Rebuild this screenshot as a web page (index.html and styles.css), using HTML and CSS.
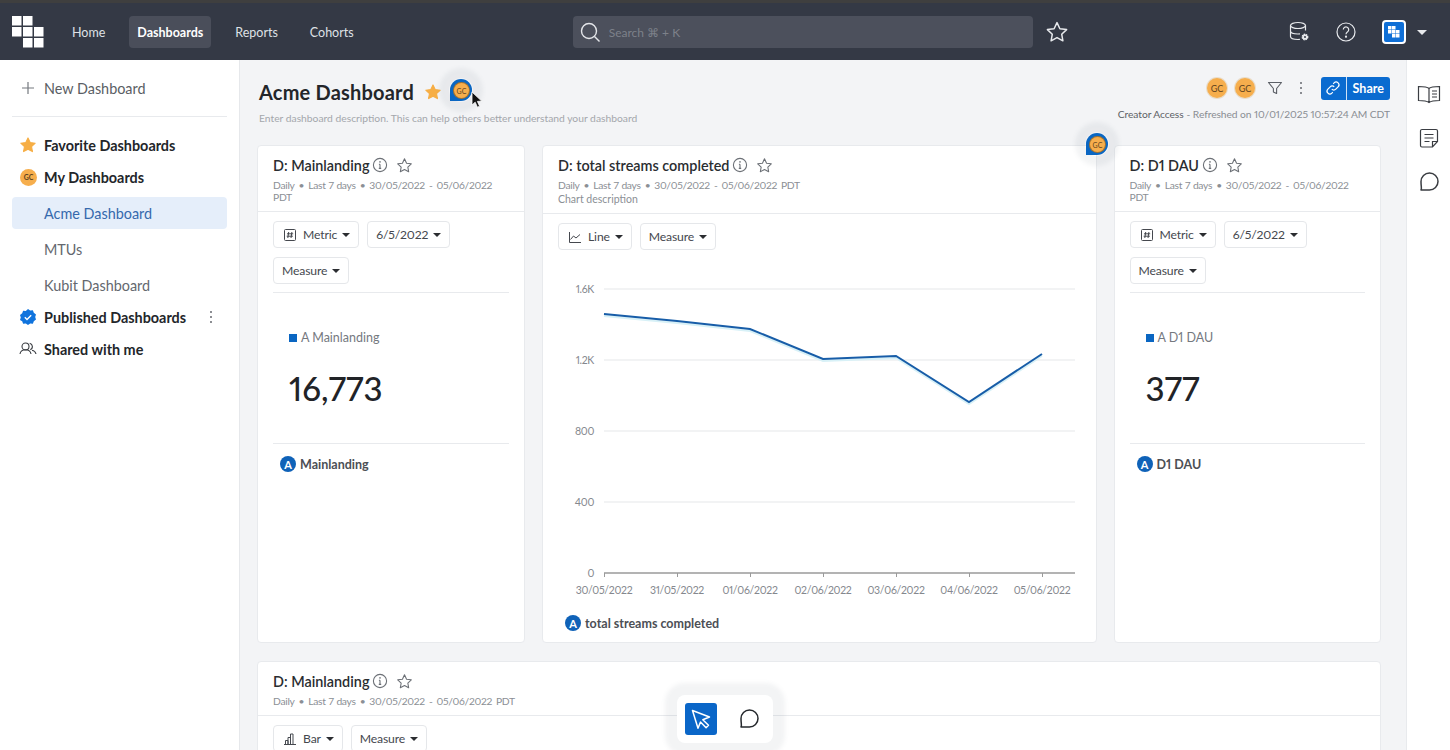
FILE: index.html
```html
<!DOCTYPE html>
<html lang="en">
<head>
<meta charset="utf-8">
<title>Acme Dashboard</title>
<link rel="stylesheet" href="styles.css">
</head>
<body>
<svg class="defs" width="0" height="0" aria-hidden="true">
  <symbol id="star" viewBox="0 0 24 24"><path d="M12 2.6l2.9 6.1 6.7.9-4.9 4.6 1.2 6.6-5.9-3.2-5.9 3.2 1.2-6.6-4.9-4.6 6.7-.9z" fill="none" stroke="currentColor" stroke-width="1.5" stroke-linejoin="round"/></symbol>
  <symbol id="starfill" viewBox="0 0 24 24"><path d="M12 2.6l2.9 6.1 6.7.9-4.9 4.6 1.2 6.6-5.9-3.2-5.9 3.2 1.2-6.6-4.9-4.6 6.7-.9z" fill="#f6ae45" stroke="#f6ae45" stroke-width="1.5" stroke-linejoin="round"/></symbol>
  <symbol id="info" viewBox="0 0 16 16"><circle cx="8" cy="8" r="6.6" fill="none" stroke="currentColor" stroke-width="1.1"/><path d="M8 7.2v4.2M6.8 11.4h2.4M6.9 7.2H8" fill="none" stroke="currentColor" stroke-width="1.1"/><circle cx="8" cy="4.9" r=".8" fill="currentColor"/></symbol>
  <symbol id="bubble" viewBox="0 0 24 24"><path d="M12 1a11 11 0 0 1 0 22H1V12A11 11 0 0 1 12 1z" fill="#0a66c2"/></symbol>
  <symbol id="comment" viewBox="0 0 24 24"><path d="M12.5 3a8.5 8.5 0 0 1 0 17H4c1-1.5 0-3 0-8.500A8.500 8.500 0 0 1 12.500 3z" fill="none" stroke="currentColor" stroke-width="1.5" stroke-linejoin="round"/></symbol>
</svg>

<header class="topbar">
  <svg class="logo" width="32" height="32" viewBox="0 0 32 32" aria-hidden="true">
    <g fill="#fff"><rect x="0" y="0" width="9.500" height="9.500"/><rect x="11" y="0" width="9.500" height="9.500"/><rect x="0" y="11" width="9.500" height="9.500"/><rect x="11" y="11" width="9.500" height="9.500"/><rect x="22" y="11" width="9.500" height="9.500"/><rect x="11" y="22" width="9.500" height="9.500"/><rect x="22" y="22" width="9.500" height="9.500"/></g>
  </svg>
  <nav class="nav">
    <a class="nav-item">Home</a>
    <a class="nav-item is-active">Dashboards</a>
    <a class="nav-item">Reports</a>
    <a class="nav-item">Cohorts</a>
  </nav>
  <div class="search">
    <svg width="22" height="22" viewBox="0 0 22 22" aria-hidden="true"><circle cx="10" cy="10" r="7.500" fill="none" stroke="#e4e6ea" stroke-width="1.400"/><path d="M15.500 15.500l5 5" stroke="#e4e6ea" stroke-width="1.400"/></svg>
    <span>Search ⌘ + K</span>
  </div>
  <svg class="top-star" width="24" height="24" aria-hidden="true"><use href="#star"/></svg>
  <div class="top-right">
    <svg width="22" height="22" viewBox="0 0 22 22" aria-hidden="true" fill="none" stroke="#e8eaed" stroke-width="1.200"><ellipse cx="10" cy="4.500" rx="7.500" ry="3"/><path d="M2.500 4.500v11c0 1.700 3.300 3 7.500 3 .7 0 1.300 0 1.900-.1M17.500 4.500v5M2.500 10c0 1.700 3.300 3 7.500 3 .7 0 1.400 0 2-.1"/><circle cx="17" cy="16" r="2.600" fill="#e8eaed" stroke-dasharray="1.500 .6" stroke-width="1.600"/><circle cx="17" cy="16" r="1" fill="#343945" stroke="none"/></svg>
    <svg width="20" height="20" viewBox="0 0 20 20" aria-hidden="true" fill="none" stroke="#e8eaed" stroke-width="1.200"><circle cx="10" cy="10" r="9"/><path d="M7.300 7.600a2.700 2.700 0 1 1 4.300 2.200c-1 .7-1.600 1.200-1.600 2.500"/><circle cx="10" cy="14.700" r=".5" fill="#e8eaed"/></svg>
    <div class="workspace">
      <svg width="14" height="14" viewBox="0 0 14 14" aria-hidden="true"><g fill="#fff"><rect x="1" y="1" width="3.500" height="3.500"/><rect x="5" y="1" width="3.500" height="3.500"/><rect x="1" y="5" width="3.500" height="3.500"/><rect x="5" y="5" width="3.500" height="3.500"/><rect x="9" y="5" width="3.500" height="3.500"/><rect x="5" y="9" width="3.500" height="3.500"/><rect x="9" y="9" width="3.500" height="3.500"/></g></svg>
    </div>
    <span class="caret caret-light"></span>
  </div>
</header>

<div class="shell">
  <aside class="sidebar">
    <div class="new-row">
      <svg width="14" height="14" viewBox="0 0 14 14" aria-hidden="true"><path d="M7 1v12M1 7h12" stroke="#75797f" stroke-width="1.200"/></svg>
      <span>New Dashboard</span>
    </div>
    <ul class="tree">
      <li class="tree-head"><svg class="tree-icon" width="18" height="18" aria-hidden="true"><use href="#starfill"/></svg>Favorite Dashboards</li>
      <li class="tree-head"><span class="avatar avatar-side">GC</span>My Dashboards</li>
      <li class="tree-sub is-current">Acme Dashboard</li>
      <li class="tree-sub">MTUs</li>
      <li class="tree-sub">Kubit Dashboard</li>
      <li class="tree-head">
        <svg class="tree-icon" width="18" height="18" viewBox="0 0 18 18" aria-hidden="true"><path d="M9 1l2.200 1.500 2.700-.2.900 2.500 2.200 1.600-.8 2.600.8 2.600-2.200 1.600-.9 2.500-2.700-.2L9 17l-2.200-1.500-2.700.2-.9-2.500L1 12.100 1.800 9.500 1 6.900l2.200-1.600.9-2.500 2.700.2z" fill="#0f73dd"/><path d="M5.800 9.300l2.200 2.200 4.200-4.300" fill="none" stroke="#fff" stroke-width="1.400"/></svg>
        Published Dashboards
        <span class="kebab kebab-side"><i></i><i></i><i></i></span>
      </li>
      <li class="tree-head">
        <svg class="tree-icon" width="18" height="18" viewBox="0 0 18 18" aria-hidden="true" fill="none" stroke="#3a3d42" stroke-width="1.100"><circle cx="6.500" cy="6.500" r="3.500"/><path d="M1 14c.4-2.700 2.400-4.200 5.500-4.200S11.600 11.300 12 14M10.700 3.200a3.500 3.500 0 0 1 .6 6.600M13 10.200c2.300.4 3.600 1.800 4 3.800"/></svg>
        Shared with me
      </li>
    </ul>
  </aside>

  <main class="main">
    <section class="page-head">
      <div class="head-left">
        <div class="title-row">
          <h1>Acme Dashboard</h1>
          <svg width="18" height="18" aria-hidden="true"><use href="#starfill"/></svg>
        </div>
        <p class="desc">Enter dashboard description. This can help others better understand your dashboard</p>
      </div>
      <div class="head-right">
        <div class="actions">
          <span class="avatar">GC</span>
          <span class="avatar">GC</span>
          <svg class="filter" width="16" height="16" viewBox="0 0 16 16" aria-hidden="true"><path d="M1.500 2.500h13L9.600 8.500v5l-3.200-1.600V8.500z" fill="none" stroke="#5b5f66" stroke-width="1.100" stroke-linejoin="round"/></svg>
          <span class="kebab"><i></i><i></i><i></i></span>
          <div class="share">
            <span class="share-link"><svg width="16" height="16" viewBox="0 0 16 16" aria-hidden="true" fill="none" stroke="#fff" stroke-width="1.200"><path d="M6.800 9.200a2.800 2.800 0 0 0 4 0l2.300-2.300a2.800 2.800 0 0 0-4-4l-.9.900"/><path d="M9.200 6.800a2.800 2.800 0 0 0-4 0L2.900 9.100a2.800 2.800 0 0 0 4 4l.9-.9"/></svg></span>
            <span class="share-text">Share</span>
          </div>
        </div>
        <p class="access"><span class="access-role">Creator Access</span><span>- Refreshed on 10/01/2025 10:57:24 AM CDT</span></p>
      </div>
    </section>

    <section class="board">
      <article class="card">
        <div class="card-head">
          <div class="card-title"><h2>D: Mainlanding</h2><svg class="i-info" width="16" height="16" aria-hidden="true"><use href="#info"/></svg><svg class="i-star" width="17" height="17" aria-hidden="true"><use href="#star"/></svg></div>
          <p class="meta meta-date"><span>Daily</span><span>•</span><span>Last 7 days</span><span>•</span><span>30/05/2022</span><span>-</span><span>05/06/2022</span><span>PDT</span></p>
        </div>
        <div class="card-body">
          <div class="tools tools-rule">
            <button class="tool"><svg width="14" height="14" viewBox="0 0 14 14" aria-hidden="true" fill="none" stroke="#45484e" stroke-width="1"><rect x="1.500" y="1.500" width="11" height="11" rx="1"/><path d="M5.700 4l-.9 6M8.900 4L8 10M4 5.800h6.200M3.700 8.200h6.200"/></svg>Metric<span class="caret"></span></button>
            <button class="tool">6/5/2022<span class="caret"></span></button>
            <button class="tool">Measure<span class="caret"></span></button>
          </div>
          <div class="metric">
            <div class="metric-label"><span class="swatch"></span>A Mainlanding</div>
            <div class="metric-value">16,773</div>
          </div>
          <div class="legend legend-rule"><span class="badge">A</span>Mainlanding</div>
        </div>
      </article>

      <article class="card">
        <div class="card-head">
          <div class="card-title"><h2>D: total streams completed</h2><svg class="i-info" width="16" height="16" aria-hidden="true"><use href="#info"/></svg><svg class="i-star" width="17" height="17" aria-hidden="true"><use href="#star"/></svg></div>
          <p class="meta meta-date"><span>Daily</span><span>•</span><span>Last 7 days</span><span>•</span><span>30/05/2022</span><span>-</span><span>05/06/2022</span><span>PDT</span></p>
          <p class="meta">Chart description</p>
        </div>
        <div class="card-body">
          <div class="tools">
            <button class="tool"><svg width="14" height="14" viewBox="0 0 14 14" aria-hidden="true" fill="none" stroke="#45484e" stroke-width="1"><path d="M1.500 2v10.500H13M2.500 9.500l3-3.500 2.500 2 4-3.500"/></svg>Line<span class="caret"></span></button>
            <button class="tool">Measure<span class="caret"></span></button>
          </div>
          <svg class="chart" width="522" height="350" viewBox="558 263 522 350" aria-label="Line chart of total streams completed">
            <g stroke="#eeeff1" stroke-width="1.500"><path d="M604 289H1075M604 360H1075M604 431H1075M604 502H1075"/></g>
            <path d="M604 573H1075" stroke="#9a9a9a" stroke-width="1.500"/>
            <path d="M604.500 573v4M677.500 573v4M750.500 573v4M823.500 573v4M896.500 573v4M969.500 573v4M1042.500 573v4" stroke="#9a9a9a"/>
            <path d="M604 316L677 323 750 331 823 361 896 358 969 404 1042 356" fill="none" stroke="#d8f1f7" stroke-width="2"/>
            <path d="M604 314L677 321 750 329 823 359 896 356 969 402 1042 354" fill="none" stroke="#175da8" stroke-width="2"/>
            <g class="axis-y" text-anchor="end"><text x="594" y="293">1.6K</text><text x="594" y="364">1.2K</text><text x="594" y="435">800</text><text x="594" y="506">400</text><text x="594" y="577">0</text></g>
            <g class="axis-x" text-anchor="middle"><text x="604" y="594">30/05/2022</text><text x="677" y="594">31/05/2022</text><text x="750" y="594">01/06/2022</text><text x="823" y="594">02/06/2022</text><text x="896" y="594">03/06/2022</text><text x="969" y="594">04/06/2022</text><text x="1042" y="594">05/06/2022</text></g>
          </svg>
          <div class="legend legend-chart"><span class="badge">A</span>total streams completed</div>
        </div>
      </article>

      <article class="card">
        <div class="card-head">
          <div class="card-title"><h2>D: D1 DAU</h2><svg class="i-info" width="16" height="16" aria-hidden="true"><use href="#info"/></svg><svg class="i-star" width="17" height="17" aria-hidden="true"><use href="#star"/></svg></div>
          <p class="meta meta-date"><span>Daily</span><span>•</span><span>Last 7 days</span><span>•</span><span>30/05/2022</span><span>-</span><span>05/06/2022</span><span>PDT</span></p>
        </div>
        <div class="card-body">
          <div class="tools tools-rule">
            <button class="tool"><svg width="14" height="14" viewBox="0 0 14 14" aria-hidden="true" fill="none" stroke="#45484e" stroke-width="1"><rect x="1.500" y="1.500" width="11" height="11" rx="1"/><path d="M5.700 4l-.9 6M8.900 4L8 10M4 5.800h6.200M3.700 8.200h6.200"/></svg>Metric<span class="caret"></span></button>
            <button class="tool">6/5/2022<span class="caret"></span></button>
            <button class="tool">Measure<span class="caret"></span></button>
          </div>
          <div class="metric">
            <div class="metric-label"><span class="swatch"></span>A D1 DAU</div>
            <div class="metric-value">377</div>
          </div>
          <div class="legend legend-rule"><span class="badge">A</span>D1 DAU</div>
        </div>
      </article>

      <article class="card card-wide">
        <div class="card-head">
          <div class="card-title"><h2>D: Mainlanding</h2><svg class="i-info" width="16" height="16" aria-hidden="true"><use href="#info"/></svg><svg class="i-star" width="17" height="17" aria-hidden="true"><use href="#star"/></svg></div>
          <p class="meta meta-date"><span>Daily</span><span>•</span><span>Last 7 days</span><span>•</span><span>30/05/2022</span><span>-</span><span>05/06/2022</span><span>PDT</span></p>
        </div>
        <div class="card-body">
          <div class="tools">
            <button class="tool"><svg width="14" height="14" viewBox="0 0 14 14" aria-hidden="true" fill="none" stroke="#45484e" stroke-width="1"><path d="M1 12.500h12M2.500 12.500v-4h2.500v4M5 12.500v-7h2.500v7M7.500 12.500V2H10v10.500"/></svg>Bar<span class="caret"></span></button>
            <button class="tool">Measure<span class="caret"></span></button>
          </div>
        </div>
      </article>
    </section>
  </main>

  <aside class="rail">
    <svg width="24" height="22" viewBox="0 0 24 22" aria-hidden="true" fill="none" stroke="#3a3d42" stroke-width="1.200"><path d="M12 4.500C10.500 3 7 2.500 1.500 2.500v14c5 0 8.500.5 10.500 2 2-1.500 5.500-2 10.500-2v-14C17 2.500 13.500 3 12 4.500zM12 4.500v14M15 7h5M15 10h5M15 13h5"/></svg>
    <svg width="20" height="22" viewBox="0 0 20 22" aria-hidden="true" fill="none" stroke="#3a3d42" stroke-width="1.200"><path d="M3 2.500h14a1.500 1.500 0 0 1 1.500 1.500v10.500l-5 5.500H3A1.500 1.500 0 0 1 1.500 18.500V4A1.500 1.500 0 0 1 3 2.500zM13.500 20v-5.500h5M5.500 7.500h9M5.500 11h9M5.500 14.500h5"/></svg>
    <svg class="rail-comment" width="24" height="24" aria-hidden="true"><use href="#comment"/></svg>
  </aside>
</div>

<div class="marker marker-a"><svg width="24" height="24" aria-hidden="true"><use href="#bubble"/></svg><span class="avatar avatar-mini">GC</span></div>
<svg class="pointer" width="12" height="18" viewBox="0 0 12 18" aria-hidden="true"><path d="M1 1v13l3.200-2.800 2.200 5 2.200-1-2.200-4.800 4.300-.3z" fill="#111" stroke="#fff" stroke-width=".8"/></svg>
<div class="marker marker-b"><svg width="24" height="24" aria-hidden="true"><use href="#bubble"/></svg><span class="avatar avatar-mini">GC</span></div>

<div class="dock">
  <span class="dock-btn is-on"><svg width="24" height="24" viewBox="0 0 24 24" aria-hidden="true"><path d="M3.500 3.500l17 6.500-6.700 2.700 5.700 5.600-2.400 2.400-5.600-5.700L9 21.200z" fill="none" stroke="#fff" stroke-width="1.500" stroke-linejoin="round"/></svg></span>
  <span class="dock-btn"><svg width="24" height="24" aria-hidden="true"><use href="#comment"/></svg></span>
</div>
</body>
</html>
```
FILE: styles.css
```css
* { box-sizing: border-box; }
html, body { height: 100%; }
body {
  margin: 0;
  overflow: hidden;
  font-family: Lato, "Liberation Sans", sans-serif;
  font-variant-numeric: proportional-nums;
  color: #1f2124;
  background: #f3f4f6;
}
.defs { position: absolute; }
h1, h2, p, ul { margin: 0; padding: 0; }

/* top bar */
.topbar {
  height: 60px;
  display: flex;
  align-items: center;
  background: #343945;
  border-top: 3px solid #3f3f3f;
  padding: 1px 0 0 12px;
}
.logo { flex: none; }
.nav { display: flex; align-items: center; gap: 16px; margin-left: 20px; }
.nav-item {
  height: 32px;
  padding: 0 8px;
  line-height: 33px;
  font-size: 12.500px;
  color: #dfe1e5;
  border-radius: 4px;
}
.nav-item.is-active { background: #4a4e5a; color: #fff; font-weight: 700; }
.search {
  margin-left: 211px;
  width: 460px;
  height: 32px;
  display: flex;
  align-items: center;
  gap: 8px;
  padding-left: 6px;
  background: #4c505c;
  border-radius: 4px;
  font-size: 12px;
  color: #7d818a;
}
.top-star { margin-left: 12px; color: #e8eaed; }
.top-right { margin-left: auto; display: flex; align-items: center; gap: 26px; padding-right: 23px; }
.workspace {
  width: 24px;
  height: 24px;
  display: flex;
  align-items: center;
  justify-content: center;
  background: #0f6fd6;
  border: 2px solid #fff;
  border-radius: 4px;
}
.top-right .caret-light { margin-left: -15px; }
.caret {
  display: inline-block;
  width: 0;
  height: 0;
  border: 4px solid transparent;
  border-top: 4px solid #2b2d31;
  border-bottom: 0;
}
.caret-light { border-width: 5px 5px 0; border-top-color: #e8eaed; }

/* shell */
.shell { display: flex; height: 690px; }
.sidebar {
  width: 240px;
  flex: none;
  background: #fff;
  border-right: 1px solid #e6e8eb;
  padding: 0 12px;
}
.new-row {
  height: 57px;
  display: flex;
  align-items: center;
  gap: 9px;
  padding: 0 9px;
  margin-bottom: 12px;
  border-bottom: 1px solid #e8eaed;
  font-size: 14.400px;
  color: #5a5e64;
}
.tree { list-style: none; }
.tree-head {
  height: 32px;
  display: flex;
  align-items: center;
  font-size: 14.400px;
  font-weight: 700;
  color: #23262a;
  padding-left: 7px;
}
.tree-sub + .tree-head { margin-top: -2px; }
.tree-icon { flex: none; margin-right: 7px; }
.tree-sub {
  height: 36px;
  display: flex;
  align-items: center;
  padding-left: 32px;
  font-size: 14.400px;
  color: #64686e;
  border-radius: 4px;
}
.tree-sub.is-current { height: 32px; margin-top: 4px; color: #3569ad; background: #e5eefa; }
.tree-sub.is-current + .tree-sub { margin-top: 2px; }
.kebab { display: inline-flex; flex-direction: column; gap: 3px; }
.kebab i { width: 2px; height: 2px; border-radius: 50%; background: #66696f; display: block; }
.kebab-side { margin-left: auto; margin-right: 15px; }

/* avatars */
.avatar {
  width: 20px;
  height: 20px;
  flex: none;
  display: inline-flex;
  align-items: center;
  justify-content: center;
  border-radius: 50%;
  background: #f6ae4d;
  font-size: 9px;
  color: #5f4320;
  box-shadow: 0 0 0 1px #e9ddca;
}
.avatar-side { width: 17px; height: 17px; font-size: 7px; margin: 0 7px 0 1px; box-shadow: none; }
.avatar-mini { position: absolute; left: 5px; top: 5px; width: 15px; height: 15px; font-size: 7px; box-shadow: 0 0 0 1px #a9742c; }

/* main */
.main { flex: 1; min-width: 0; overflow: hidden; }
.page-head {
  height: 85px;
  display: flex;
  justify-content: space-between;
  padding: 17px 16px 0 19px;
}
.title-row { display: flex; align-items: center; gap: 10px; height: 30px; }
h1 { font-size: 20px; font-weight: 700; color: #23262a; letter-spacing: .2px; }
.desc { margin-top: 5px; font-size: 10.300px; color: #a4a7ac; }
.head-right { display: flex; flex-direction: column; align-items: flex-end; }
.actions { display: flex; align-items: center; height: 24px; margin-top: -1px; }
.actions .avatar + .avatar { margin-left: 8px; }
.filter { margin-left: 12px; }
.actions .kebab { margin-left: 17px; }
.share { margin-left: 19px; height: 23px; display: flex; background: #0a6bd0; border-radius: 3px; color: #fff; }
.share-link { width: 25.500px; display: flex; align-items: center; justify-content: center; border-right: 1px solid #cfe2f6; }
.share-text { width: 43.500px; line-height: 23px; text-align: center; font-size: 12.500px; font-weight: 700; }
.access { display: flex; gap: 3px; margin-top: 8px; font-size: 10.250px; color: #898d93; letter-spacing: -.07px; }
.access-role { color: #5c5f65; }

/* cards */
.board {
  display: grid;
  grid-template-columns: 268px 554.500px 267.500px;
  grid-template-rows: 498px auto;
  column-gap: 17px;
  row-gap: 18px;
  margin-left: 17px;
  width: 1124px;
}
.card {
  background: #fff;
  border: 1px solid #e8eaed;
  border-radius: 4px;
  display: flex;
  flex-direction: column;
}
.card-wide { grid-column: 1 / -1; height: 120px; }
.card-head { padding: 9px 15px 8px; border-bottom: 1px solid #e8eaed; }
.card-title { display: flex; align-items: center; height: 20px; }
h2 { font-size: 14.400px; font-weight: 600; color: #2a2d31; }
.i-info { color: #6c7076; margin-left: 3px; }
.i-star { color: #6c7076; margin-left: 8px; }
.meta { margin-top: 4px; font-size: 10.500px; line-height: 12px; color: #8b8f95; }
.meta + .meta { margin-top: 2px; }
.meta-date { display: flex; flex-wrap: wrap; column-gap: 4px; font-size: 10.300px; letter-spacing: -.3px; word-spacing: .5px; }
.card-body { padding: 9px 15px 0; flex: 1; display: flex; flex-direction: column; min-height: 0; }
.tools { display: flex; flex-wrap: wrap; gap: 9px 8px; }
.tools-rule { padding-bottom: 8px; border-bottom: 1px solid #e8eaed; }
.tool {
  height: 27px;
  padding: 0 8px;
  display: inline-flex;
  align-items: center;
  gap: 5px;
  background: #fff;
  border: 1px solid #e5e7ea;
  border-radius: 4px;
  font: 12.200px Lato, "Liberation Sans", sans-serif;
  font-variant-numeric: proportional-nums;
  letter-spacing: -.15px;
  color: #45484e;
}
.tool svg { margin: 0 1px; }
.metric { height: 151px; padding: 36px 0 0 16px; border-bottom: 1px solid #e8eaed; }
.metric-label { display: flex; align-items: center; gap: 4px; font-size: 12.500px; line-height: 18px; color: #75797f; }
.swatch { width: 8px; height: 8px; background: #0a66c2; }
.metric-value { margin-top: 19px; font-size: 33px; font-weight: 500; line-height: 44px; color: #212327; }
.legend { display: flex; align-items: center; gap: 4px; font-size: 12.500px; font-weight: 700; color: #4c4f55; }
.legend-rule { margin-top: 12px; padding-left: 7px; }
.legend-chart { margin-top: 2px; padding-left: 7px; }
.badge {
  width: 16px;
  height: 16px;
  flex: none;
  display: inline-flex;
  align-items: center;
  justify-content: center;
  border-radius: 50%;
  background: #0f62b8;
  color: #fff;
  font-size: 11px;
  font-weight: 700;
}
.chart { display: block; flex: none; margin-top: 13px; }
.chart text { font-family: Lato, "Liberation Sans", sans-serif; font-size: 10.500px; letter-spacing: -.3px; font-variant-numeric: proportional-nums; fill: #85888e; }

/* right rail */
.rail {
  width: 44px;
  flex: none;
  background: #fff;
  border-left: 1px solid #e8eaed;
  display: flex;
  flex-direction: column;
  align-items: center;
  gap: 21px;
  padding-top: 24px;
}
.rail-comment { color: #3a3d42; }

/* overlays */
.marker {
  position: absolute;
  width: 24px;
  height: 24px;
  box-shadow: 0 0 4px 10px rgba(100, 110, 130, .08);
  border-radius: 50%;
}
.marker-a { left: 449px; top: 78px; }
.marker-b { left: 1085px; top: 132px; }
.pointer { position: absolute; left: 471px; top: 91px; }
.dock {
  position: absolute;
  left: 677px;
  top: 695px;
  width: 96px;
  height: 48px;
  display: flex;
  align-items: center;
  gap: 16px;
  padding-left: 8px;
  background: #fff;
  border-radius: 8px;
  box-shadow: 0 0 4px 12px rgba(100, 110, 130, .08);
}
.dock-btn { width: 32px; height: 32px; display: flex; align-items: center; justify-content: center; border-radius: 3px; color: #25282c; }
.dock-btn.is-on { background: #0a66c8; }
```
